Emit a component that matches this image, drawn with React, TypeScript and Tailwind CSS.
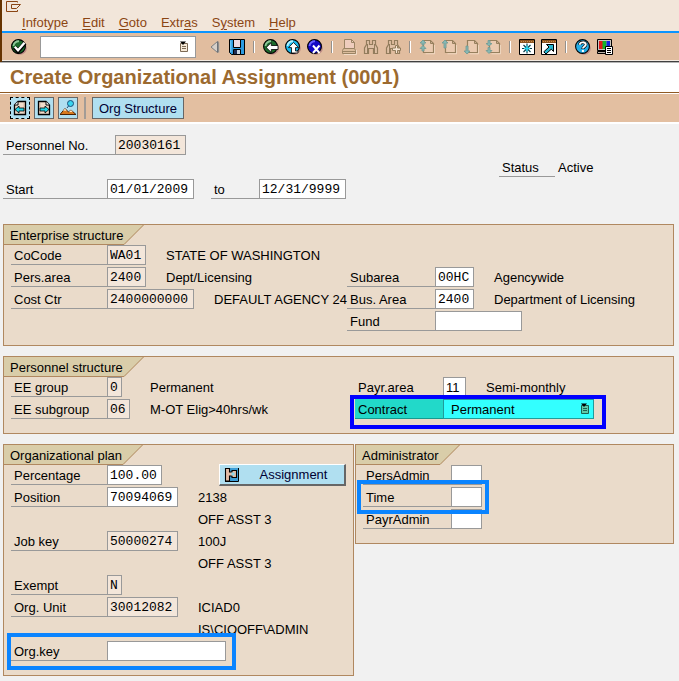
import React, { ReactNode, useId } from "react";

const SANS = "font-['Liberation_Sans',Arial,sans-serif]";
const MONO = "font-['Liberation_Mono','Courier_New',monospace]";

function Icon({ children, className = "" }: { children: ReactNode; className?: string }) {
  return (
    <svg viewBox="0 0 16 16" className={`h-4 w-4 shrink-0 ${className}`} fill="none" aria-hidden="true">
      {children}
    </svg>
  );
}

function Ball({ fill, light, children }: { fill: string; light: string; children: ReactNode }) {
  return (
    <Icon>
      <circle cx="9" cy="9" r="6.8" fill="#bd8a84" />
      <circle cx="7.5" cy="7.5" r="6.9" fill={fill} stroke="#000" strokeWidth="1.1" />
      <path d="M2.5 7A5 5 0 0 1 8 2.3" stroke={light} strokeWidth="1.8" />
      {children}
    </Icon>
  );
}

const CheckIcon = () => (
  <Ball fill="#1c6b2c" light="#8fc79a">
    <path d="M3.5 8.3L7 12L13.8 4" stroke="#000" strokeWidth="4.2" />
    <path d="M3.8 7.8L7 11.2L13.5 3.8" stroke="#fff" strokeWidth="2.4" />
  </Ball>
);
const BackIcon = () => (
  <Ball fill="#1c6b2c" light="#8fc79a">
    <path d="M3.2 8.5L8.3 3.5V6.5H15V10.5H8.3V13.5Z" fill="#fff" stroke="#000" strokeWidth=".8" />
  </Ball>
);
const UpIcon = () => (
  <Ball fill="#19b9ee" light="#b6f3ff">
    <path d="M8.5 3.5L13.5 8.6H10.5V12H13V14H6.5V8.6H3.5Z" fill="#fff" stroke="#000" strokeWidth=".8" />
  </Ball>
);
const ExitIcon = () => (
  <Ball fill="#1208c4" light="#6a62ff">
    <path d="M6 6.5L12.5 14M12.5 6.5L6 14" stroke="#fff" strokeWidth="2" />
  </Ball>
);
const TriangleIcon = () => (
  <Icon>
    <path d="M12.5 3V14L5.5 8.5Z" fill="#bdb5ad" />
    <path d="M10.5 2.5V13.5L4 8Z" fill="#d6d0ca" stroke="#7b7f83" />
    <path d="M11 2.5V13.5" stroke="#5f646a" />
  </Icon>
);
const SaveIcon = () => (
  <Icon>
    <path d="M.5 .5H15.5V15.5H2.5L.5 13.5Z" fill="#2c9be0" stroke="#000" />
    <path d="M4.5 .5H11.5V8.5H4.5Z" fill="#ecd9e2" stroke="#000" />
    <path d="M4.5 10.5H11.5V15.5H4.5Z" fill="#c9d6e4" stroke="#000" />
    <path d="M5 11H8V15H5Z" fill="#1c2d54" />
    <path d="M1.8 1.5V13" stroke="#83d4ff" />
  </Icon>
);
const PrintIcon = () => (
  <Icon>
    <path d="M3.5 9.5V.5H10.5L13.5 3.5V9.5" fill="#efcdbd" stroke="#9b8464" />
    <path d="M10.5 .5V3.5H13.5" stroke="#9b8464" />
    <path d="M2.5 9.5H13.5L14.5 11.5V14.5H1.5V11.5Z" fill="#dcbd9d" stroke="#9b8464" />
    <path d="M1.5 12.5H14.5" stroke="#9b8464" />
    <path d="M3 15.5H15.5V11" stroke="#f2dcc8" />
  </Icon>
);
const Binocular = () => (
  <path
    d="M3.5 1.5H6.5V5.5H9.5V1.5H12.5V5.5L14.5 9V14.5H10.5V9.5H5.5V14.5H1.5V9L3.5 5.5Z"
    fill="#dfc0a5"
    stroke="#927c5c"
    strokeWidth="1.2"
  />
);
const FindIcon = () => (
  <Icon>
    <Binocular />
    <path d="M4.5 5V14M11.5 5V14" stroke="#927c5c" />
  </Icon>
);
const FindNextIcon = () => (
  <Icon>
    <Binocular />
    <path d="M4.5 5V14" stroke="#927c5c" />
    <path d="M10.5 6.5H12.5V9H15.5V11.5H12.5V14.5H10.5V11.5H7.5V9H10.5Z" fill="#f5e4d3" stroke="#927c5c" />
  </Icon>
);
function PageIcon({ arrows }: { arrows: string }) {
  return (
    <Icon>
      <path d="M4.5 1.5H11.5L14.5 4.5V13.5H4.5Z" fill="#ebcbb1" stroke="#97805e" strokeWidth="1.2" />
      <path d="M11.5 1.5V4.5H14.5" stroke="#97805e" />
      <path d="M6.5 14.8H15.6V6" stroke="#f4dfcb" strokeWidth=".8" />
      <path d={arrows} fill="#86b8b4" stroke="#6f9a94" strokeWidth=".8" />
    </Icon>
  );
}
function SessionFrame({ children }: { children: ReactNode }) {
  return (
    <Icon>
      <path d="M.5 .5H15.5V15.5H.5Z" fill="#fff" stroke="#000" />
      <path d="M1 1H15V4H1Z" fill="#8c5420" />
      <path d="M2 2.5H15" stroke="#c98d4d" strokeDasharray="1 1" />
      {children}
    </Icon>
  );
}
const NewSessionIcon = () => (
  <SessionFrame>
    <path d="M8 4.5V14.5M3 9.5H13M4.5 6L11.5 13M11.5 6L4.5 13" stroke="#063f4d" strokeWidth="1.2" />
    <path d="M8 6.5V12.5M5 9.5H11" stroke="#29d8f0" strokeWidth="1.6" />
  </SessionFrame>
);
const ShortcutIcon = () => (
  <SessionFrame>
    <path d="M5.5 5.5H12.5V12.5L10.3 10.2L5 15L2.8 12.8L8 8Z" fill="#25b6cf" stroke="#000" />
  </SessionFrame>
);
const HelpIcon = () => (
  <Icon>
    <circle cx="9" cy="9" r="6.8" fill="#bd8a84" />
    <circle cx="7.5" cy="7.5" r="6.9" fill="#23aee8" stroke="#000" strokeWidth="1.1" />
    <path d="M4.8 5.8C4.8 2.6 10.8 2.6 10.8 5.6C10.8 7.6 7.9 7.4 7.9 10" stroke="#000" strokeWidth="3.2" />
    <path d="M4.8 5.8C4.8 2.6 10.8 2.6 10.8 5.6C10.8 7.6 7.9 7.4 7.9 9.6M7.9 11V13" stroke="#fff" strokeWidth="2" />
  </Icon>
);
const LayoutIcon = () => (
  <Icon>
    <path d="M.5 .5H14.5V11.5H.5Z" fill="#c9c5c0" stroke="#000" />
    <path d="M2 2H6V10H2Z" fill="#e01818" />
    <path d="M5.5 2H9.5V10H5.5Z" fill="#12b32a" />
    <path d="M9.5 2H13V10H9.5Z" fill="#1420dc" />
    <path d="M.5 12.5H9V14.5H.5Z" fill="#b8b2aa" stroke="#000" />
    <path d="M8.5 7.5H15.5V15.5H8.5Z" fill="#fff" stroke="#000" />
    <path d="M10 9.5H14M10 11.5H14M10 13.5H14" stroke="#000" />
  </Icon>
);
function SheetArrowIcon({ arrow, mirrored }: { arrow: string; mirrored?: boolean }) {
  return (
    <Icon>
      <g transform={mirrored ? "translate(16 0) scale(-1 1)" : undefined}>
        <path d="M6 1.5H13.5V14.5H2.5V5Z" fill="#f1dccb" stroke="#000" strokeWidth="1.3" />
        <path d="M6 1.5V5H2.5" fill="#fff" stroke="#000" />
        <path d="M12.2 3V13" stroke="#c4a38c" />
      </g>
      <path d={arrow} fill="#22d4e4" stroke="#000" strokeWidth=".8" />
    </Icon>
  );
}
const OverviewIcon = () => (
  <Icon>
    <circle cx="10.5" cy="3.5" r="3" fill="#39d5f0" stroke="#1c4e79" />
    <path d="M8.5 6L7 8" stroke="#1c4e79" />
    <path d="M0 14.5L5 8.5L8.5 12L11 10L16 14.5Z" fill="#d8791d" stroke="#4a2305" />
    <path d="M5 8.5L3 11L5 10.5L6.7 11.2ZM11 10L9 12L12.8 11.7Z" fill="#fff3dd" />
  </Icon>
);
const AssignmentIcon = () => (
  <svg viewBox="0 0 16 16" className="h-4 w-4" fill="none" aria-hidden="true">
    <path d="M1 1H15V14H1Z" fill="#3c9dd6" />
    <path d="M14.5 1V14.5H1" stroke="#000" />
    <path d="M1.5 1.5H5.5V5H8V3.5H12.5V10.5H8V9H5.5V14H1.5Z" fill="#e4bba4" stroke="#000" strokeWidth="1.1" />
    <path d="M7.5 5.5H10.5V8.5H7.5Z" fill="#8cd8ee" />
  </svg>
);
function ListIcon({ paper, ink }: { paper: string; ink: string }) {
  return (
    <svg viewBox="0 0 10 12" className="h-3 w-[10px]" fill="none" aria-hidden="true">
      <path d="M1.5 2.5H8.5V10.5H1.5Z" fill={paper} stroke={ink} />
      <path d="M3 5.5H7M3 7.5H7" stroke={ink} />
      <path d="M1 .5H7L4 4Z" fill="#000" />
    </svg>
  );
}

function ToolButton({ label, children }: { label: string; children: ReactNode }) {
  return (
    <button type="button" aria-label={label} className="flex h-6 w-[22px] items-center justify-center">
      {children}
    </button>
  );
}
const Separator = () => (
  <div className="flex h-6 w-3 items-center justify-center">
    <div className="h-3 w-[2px] border-l border-[#94908c] bg-white" />
  </div>
);

function MenuItem({ before = "", hot, after }: { before?: string; hot: string; after: string }) {
  return (
    <button type="button" className="leading-4 text-[#8b4513]">
      {before}
      <span className="underline underline-offset-2">{hot}</span>
      {after}
    </button>
  );
}

type FieldProps = {
  label: string;
  value?: string;
  labelWidth: string;
  width: string;
  editable?: boolean;
  sans?: boolean;
  desc?: string;
  descGap?: string;
};
function Field({ label, value = "", labelWidth, width, editable, sans, desc, descGap = "ml-5" }: FieldProps) {
  const id = useId();
  return (
    <div className="flex h-[22px] items-start whitespace-nowrap">
      <label
        htmlFor={id}
        className={`h-5 shrink-0 border-b border-[#999999] pt-[2px] pl-[3px] leading-[17px] ${labelWidth}`}
      >
        {label}
      </label>
      <input
        id={id}
        defaultValue={value}
        readOnly={!editable}
        className={`h-5 shrink-0 border border-[#999999] px-[2px] text-[13px] leading-[17px] outline-none ${width} ${
          editable ? "bg-white" : "bg-[#f3e6da]"
        } ${sans ? SANS : MONO}`}
      />
      {desc && <span className={`pt-[2px] leading-[17px] ${descGap}`}>{desc}</span>}
    </div>
  );
}

function Panel({ title, children }: { title: string; children: ReactNode }) {
  return (
    <section className="min-w-0 border border-[#b08860] bg-[#eadbca] pb-3">
      <div className="flex h-5">
        <h2 className="border-b border-[#b08860] bg-[#d9cda9] pt-[2px] pr-px pl-[6px] leading-[17px]">{title}</h2>
        <svg viewBox="0 0 20 20" className="h-5 w-5" aria-hidden="true">
          <path d="M0 0H20L0 20Z" fill="#d9cda9" />
          <path d="M0 19.5L19.5 0" stroke="#b08860" />
        </svg>
      </div>
      {children}
    </section>
  );
}

const TextRow = ({ children }: { children: ReactNode }) => (
  <div className="h-[22px] pt-[2px] pl-[194px] leading-[17px] whitespace-nowrap">{children}</div>
);

export default function App() {
  return (
    <div className={`min-h-screen bg-[#f1f1f1] pb-[5px] text-[13px] text-black ${SANS}`}>
      <header className="border-l-2 border-[#663300]">
        <div className="h-[31px] bg-[#f2e6da]">
          <svg viewBox="0 0 16 13" className="ml-1 h-[13px] w-4" fill="none" aria-hidden="true">
            <path d="M11.5 2.5V1.5H.5V11.5H11.5V10" stroke="#8b4513" />
            <path d="M5.5 4.5H14.5L10.5 8.5H5.5Z" stroke="#8b4513" />
          </svg>
          <nav className="flex gap-[14px] pt-[2px] pl-5">
            <MenuItem hot="I" after="nfotype" />
            <MenuItem hot="E" after="dit" />
            <MenuItem hot="G" after="oto" />
            <MenuItem before="Extr" hot="a" after="s" />
            <MenuItem before="S" hot="y" after="stem" />
            <MenuItem hot="H" after="elp" />
          </nav>
        </div>
        <div className="flex h-[29px] items-center border-t-2 border-[#0a94ff] bg-[#e1bd9f] pl-[6px]">
          <ToolButton label="Enter">
            <CheckIcon />
          </ToolButton>
          <div className="mr-2 ml-[10px] flex h-[22px] w-[156px] items-center border border-[#999999] bg-white pr-[6px]">
            <input aria-label="Command" className="h-full min-w-0 flex-1 px-1 outline-none" />
            <button type="button" aria-label="Command history">
              <ListIcon paper="#f6ead8" ink="#7d6a55" />
            </button>
          </div>
          <ToolButton label="Previous command">
            <TriangleIcon />
          </ToolButton>
          <ToolButton label="Save">
            <SaveIcon />
          </ToolButton>
          <Separator />
          <ToolButton label="Back">
            <BackIcon />
          </ToolButton>
          <ToolButton label="Exit">
            <UpIcon />
          </ToolButton>
          <ToolButton label="Cancel">
            <ExitIcon />
          </ToolButton>
          <Separator />
          <ToolButton label="Print">
            <PrintIcon />
          </ToolButton>
          <ToolButton label="Find">
            <FindIcon />
          </ToolButton>
          <ToolButton label="Find next">
            <FindNextIcon />
          </ToolButton>
          <Separator />
          <ToolButton label="First page">
            <PageIcon arrows="M4 1L7 4H5V6H3V4H1ZM4 6.5L7 9.5H5V12H3V9.5H1Z" />
          </ToolButton>
          <ToolButton label="Previous page">
            <PageIcon arrows="M4 1L7 4H5V9H3V4H1Z" />
          </ToolButton>
          <ToolButton label="Next page">
            <PageIcon arrows="M4 15L7 12H5V7H3V12H1Z" />
          </ToolButton>
          <ToolButton label="Last page">
            <PageIcon arrows="M4 7L7 4.5H5V1.5H3V4.5H1ZM4 14.5L7 11.5H5V8.5H3V11.5H1Z" />
          </ToolButton>
          <Separator />
          <ToolButton label="New session">
            <NewSessionIcon />
          </ToolButton>
          <ToolButton label="Create shortcut">
            <ShortcutIcon />
          </ToolButton>
          <Separator />
          <ToolButton label="Help">
            <HelpIcon />
          </ToolButton>
          <ToolButton label="Customize layout">
            <LayoutIcon />
          </ToolButton>
        </div>
        <div className="h-[2px] border-t border-b border-t-[#f4ebe2] border-b-[#404040]" />
      </header>

      <div className="border-t border-b border-t-[#b5b5b5] border-b-[#8f5a24] bg-white pl-[10px]">
        <h1 className="h-[29px] text-[20px] leading-[29px] font-bold whitespace-nowrap text-[#9c6a2f]">
          Create Organizational Assignment (0001)
        </h1>
      </div>

      <div className="flex h-[31px] items-center gap-1 border-t border-b-2 border-white bg-[#e3bfa1] pl-[10px]">
        <button
          type="button"
          aria-label="Previous record"
          className="flex h-[22px] w-5 items-center justify-center border border-dashed border-black bg-[#b0dff0]"
        >
          <SheetArrowIcon arrow="M3 9.5L7 6V8H12V11H7V13Z" />
        </button>
        <button
          type="button"
          aria-label="Next record"
          className="flex h-[22px] w-5 items-center justify-center border border-[#666666] bg-[#b0dff0]"
        >
          <SheetArrowIcon mirrored arrow="M13 9.5L9 6V8H4V11H9V13Z" />
        </button>
        <button
          type="button"
          aria-label="Overview"
          className="flex h-[22px] w-5 items-center justify-center border border-[#666666] bg-[#b0dff0]"
        >
          <OverviewIcon />
        </button>
        <div className="mx-[2px] h-[22px] w-[2px] bg-[#a39c96]" />
        <button
          type="button"
          className="h-[22px] border border-[#666666] bg-[#b0dff0] px-[6px] pt-px text-[13px] leading-5 text-[#000033]"
        >
          Org Structure
        </button>
      </div>

      <main className="pt-[11px] pr-[5px] pl-[3px]">
        <Field label="Personnel No." value="20030161" labelWidth="w-28" width="w-[71px]" />
        <div className="flex h-[22px] pl-[496px]">
          <span className="h-5 w-14 border-b border-[#999999] pt-[2px] pl-[3px] leading-[17px]">Status</span>
          <span className="pt-[2px] pl-[3px] leading-[17px]">Active</span>
        </div>
        <div className="flex gap-[17px]">
          <Field label="Start" value="01/01/2009" labelWidth="w-[104px]" width="w-[87px]" editable />
          <Field label="to" value="12/31/9999" labelWidth="w-12" width="w-[87px]" editable />
        </div>

        <div className="mt-[23px] grid gap-[10px]">
          <Panel title="Enterprise structure">
            <div className="grid grid-cols-[336px_1fr] pl-[7px]">
              <div>
                <Field
                  label="CoCode"
                  value="WA01"
                  labelWidth="w-24"
                  width="w-[39px]"
                  desc="STATE OF WASHINGTON"
                />
                <Field label="Pers.area" value="2400" labelWidth="w-24" width="w-[39px]" desc="Dept/Licensing" />
                <Field
                  label="Cost Ctr"
                  value="2400000000"
                  labelWidth="w-24"
                  width="w-[87px]"
                  desc="DEFAULT AGENCY 24"
                />
              </div>
              <div className="pt-[22px]">
                <Field label="Subarea" value="00HC" labelWidth="w-[88px]" width="w-[39px]" editable desc="Agencywide" />
                <Field
                  label="Bus. Area"
                  value="2400"
                  labelWidth="w-[88px]"
                  width="w-[39px]"
                  editable
                  desc="Department of Licensing"
                />
                <Field label="Fund" labelWidth="w-[88px]" width="w-[87px]" editable />
              </div>
            </div>
          </Panel>

          <Panel title="Personnel structure">
            <div className="grid grid-cols-[344px_1fr] pl-[7px]">
              <div>
                <Field
                  label="EE group"
                  value="0"
                  labelWidth="w-24"
                  width="w-[15px]"
                  desc="Permanent"
                  descGap="ml-7"
                />
                <Field
                  label="EE subgroup"
                  value="06"
                  labelWidth="w-24"
                  width="w-[23px]"
                  desc="M-OT Elig>40hrs/wk"
                />
              </div>
              <div>
                <Field
                  label="Payr.area"
                  value="11"
                  labelWidth="w-[88px]"
                  width="w-[23px]"
                  editable
                  sans
                  desc="Semi-monthly"
                />
                <div className="relative flex h-[22px] items-start">
                  <label
                    htmlFor="contract"
                    className="h-5 w-[88px] border-b border-[#159a90] bg-[#22d9c9] pt-[2px] pl-[3px] leading-[17px]"
                  >
                    Contract
                  </label>
                  <div className="relative">
                    <select
                      id="contract"
                      className="block h-5 w-[151px] appearance-none border border-[#1f9c9c] bg-[#33ffff] pl-[7px] text-[13px] leading-[17px] outline-none"
                    >
                      <option>Permanent</option>
                    </select>
                    <span className="pointer-events-none absolute top-1 right-1">
                      <ListIcon paper="#5fc9a8" ink="#1d5f50" />
                    </span>
                  </div>
                  <div className="pointer-events-none absolute -top-1 -left-[5px] h-[34px] w-64 border-4 border-[#0000ff]" />
                </div>
              </div>
            </div>
          </Panel>

          <div className="grid grid-cols-[351px_1fr] items-start gap-px">
            <Panel title="Organizational plan">
              <div className="flex h-[22px] items-start pl-[7px]">
                <Field label="Percentage" value="100.00" labelWidth="w-24" width="w-[55px]" editable />
                <button
                  type="button"
                  className="-mt-px mr-[7px] ml-auto flex h-[22px] w-[127px] items-center border-t border-r-2 border-b-2 border-l border-t-white border-r-[#666666] border-b-[#666666] border-l-white bg-[#b0dff0] pl-1 text-[#000033]"
                >
                  <AssignmentIcon />
                  <span className="flex-1 pt-px pl-[3px] text-center">Assignment</span>
                </button>
              </div>
              <div className="pl-[7px]">
                <Field label="Position" value="70094069" labelWidth="w-24" width="w-[71px]" editable desc="2138" />
              </div>
              <TextRow>OFF ASST 3</TextRow>
              <div className="pl-[7px]">
                <Field label="Job key" value="50000274" labelWidth="w-24" width="w-[71px]" desc="100J" />
              </div>
              <TextRow>OFF ASST 3</TextRow>
              <div className="pl-[7px]">
                <Field label="Exempt" value="N" labelWidth="w-24" width="w-[15px]" />
                <Field label="Org. Unit" value="30012082" labelWidth="w-24" width="w-[71px]" desc="ICIAD0" />
              </div>
              <TextRow>IS\CIOOFF\ADMIN</TextRow>
              <div className="relative pl-[7px]">
                <Field label="Org.key" labelWidth="w-24" width="w-[119px]" editable />
                <div className="pointer-events-none absolute -top-2 left-[3px] h-[37px] w-[229px] border-4 border-[#0a84ff]" />
              </div>
            </Panel>

            <Panel title="Administrator">
              <div className="pl-[7px]">
                <Field label="PersAdmin" labelWidth="w-[88px]" width="w-[31px]" editable />
                <div className="relative">
                  <Field label="Time" labelWidth="w-[88px]" width="w-[31px]" editable />
                  <div className="pointer-events-none absolute -top-[7px] -left-[6px] z-10 h-[34px] w-[132px] border-4 border-[#0a84ff]" />
                </div>
                <Field label="PayrAdmin" labelWidth="w-[88px]" width="w-[31px]" editable />
              </div>
            </Panel>
          </div>
        </div>
      </main>
    </div>
  );
}
